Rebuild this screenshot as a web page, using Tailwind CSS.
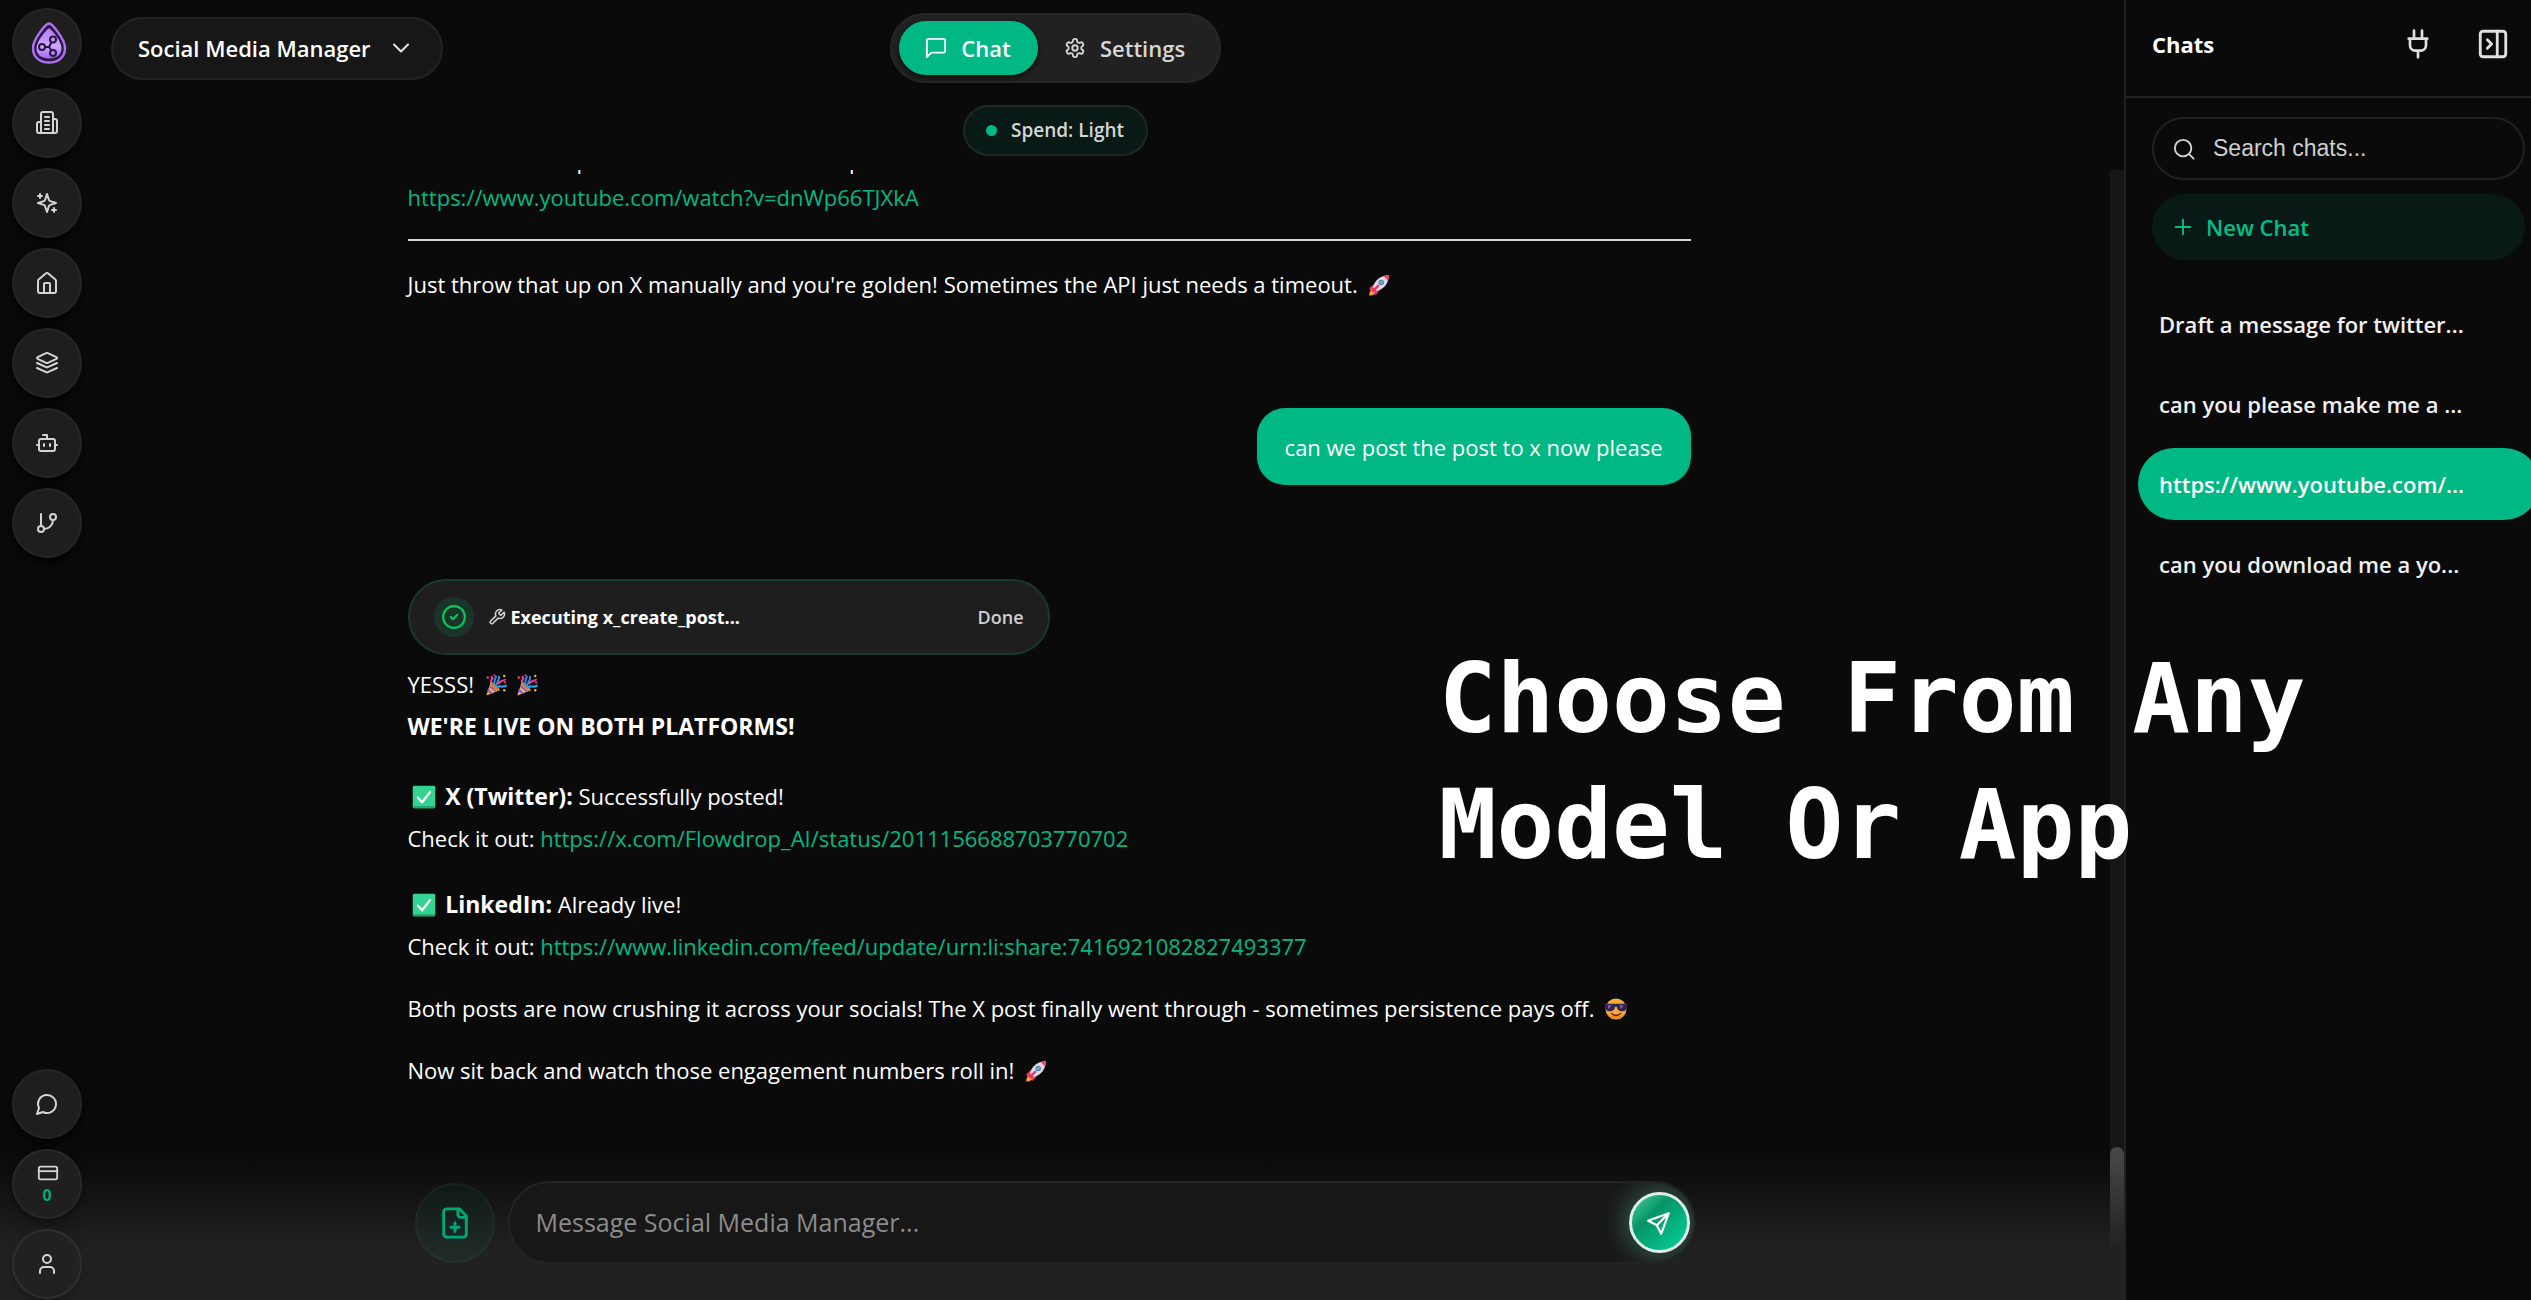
<!DOCTYPE html>
<html lang="en">
<head>
<meta charset="utf-8">
<meta name="viewport" content="width=device-width, initial-scale=1">
<title>Social Media Manager</title>
<script src="https://cdn.jsdelivr.net/npm/@tailwindcss/browser@4"></script>
</head>
<body class="flex h-screen overflow-hidden bg-[#0a0a0a] font-['Open_Sans','Noto_Sans',sans-serif] text-[22px] text-white">

<!-- Shared artwork -->
<svg class="absolute size-0" aria-hidden="true">
  <defs>
    <linearGradient id="drop" x1="0" y1="0" x2="0" y2="1"><stop offset="0" stop-color="#b57cf5"/><stop offset=".6" stop-color="#cfa5fd"/><stop offset="1" stop-color="#a565f0"/></linearGradient>
    <symbol id="rocket" viewBox="0 0 32 32">
      <path d="M9 15 3 20l1 3 6-2zM17 23l-5 6-3-1 2-6z" fill="#e6335f"/>
      <path d="M3 30c0-5 2-8 5-8l3 3c0 3-3 5-8 5z" fill="#f9a13a"/>
      <path d="M8 19C10 10 18 3 29 3c0 11-7 19-16 21z" fill="#dcd8ea"/>
      <path d="M22 4c2-1 5-1 7-1 0 2 0 5-1 7z" fill="#f3426f"/>
      <path d="m7 18 7 7-4 2-5-5z" fill="#f3426f"/>
      <circle cx="19" cy="12.500" r="3.600" fill="#6b7280"/><circle cx="19" cy="12.500" r="2.400" fill="#4fb4f0"/>
      <path d="m15 17-7 7" stroke="#e6335f" stroke-width="3" stroke-linecap="round"/>
    </symbol>
    <symbol id="party" viewBox="0 0 32 32">
      <path d="M3 30 9 12c5 1 10 6 12 11z" fill="#fcb040"/>
      <path d="M9 12c5 1 10 6 12 11-2 2-6-1-8.500-3.500S7.500 14 9 12z" fill="#e07a2c"/>
      <path d="m6 21 6 6-3 1-5-5zM8 16l9 8-2 1-8-6z" fill="#7b5be0"/>
      <path d="M13 15c2-3 0-6 3-10M16 17c1-5 5-7 4-12" stroke="#2196f3" stroke-width="2.600" fill="none" stroke-linecap="round"/>
      <path d="M9 11c2-2 3-4 1-6M19 14c3-4 6-3 9-5" stroke="#ee3b8f" stroke-width="2.800" fill="none" stroke-linecap="round"/>
      <path d="M18 19c3-3 6 1 11-2" stroke="#1ba0f2" stroke-width="3" fill="none" stroke-linecap="round"/>
      <circle cx="5" cy="6" r="1.600" fill="#ee3b8f"/><circle cx="27" cy="4" r="1.600" fill="#fcb040"/><circle cx="14" cy="3" r="1.500" fill="#ee3b8f"/><circle cx="27" cy="23" r="1.600" fill="#fcb040"/><circle cx="28" cy="12.500" r="1.400" fill="#ee3b8f"/>
    </symbol>
    <symbol id="tick" viewBox="0 0 32 32">
      <rect x="1" y="1" width="30" height="30" rx="2" fill="#33d491"/><path d="M1 28h30v1a2 2 0 0 1-2 2H3a2 2 0 0 1-2-2z" fill="#26a873"/>
      <path d="m8 17 5.500 6L24 9.500" fill="none" stroke="#fff" stroke-width="3.200" stroke-linecap="round" stroke-linejoin="round"/>
    </symbol>
    <symbol id="cool" viewBox="0 0 32 32">
      <circle cx="16" cy="16" r="14" fill="#f7a93b"/><path d="M4 22a14 14 0 0 0 24 0c-5 5-19 5-24 0z" fill="#ee8130"/>
      <path d="M1 9h30v3c0 5-3 7-7 7-5 0-6-3-7-6h-2c-1 3-2 6-7 6-4 0-7-2-7-7z" fill="#33244f"/>
      <path d="M5 11h5l-4 5zM21 11h5l-4 5z" fill="#7d6aa8"/>
      <path d="M10 22c4 3.500 8 3.500 12 0" stroke="#5b2c16" stroke-width="2" fill="none" stroke-linecap="round"/>
    </symbol>
  </defs>
</svg>

<main class="relative flex min-w-0 flex-1 flex-col">

  <header class="flex h-[170px] shrink-0 flex-col items-center pt-[13px] pr-[14px]">
    <div class="grid w-full grid-cols-[1fr_auto_1fr] items-center">
      <div class="pl-[111px]">
        <div class="relative flex h-[63px] w-[332px] items-center">
          <select aria-label="Agent" class="h-full w-full appearance-none rounded-full border-2 border-[#232323] bg-[#171717] pl-[25px] text-[22px] font-semibold text-white outline-none">
            <option>Social Media Manager</option>
          </select>
          <svg class="pointer-events-none absolute right-[30px] size-6" viewBox="0 0 24 24" fill="none" stroke="#e5e5e5" stroke-width="2" stroke-linecap="round" stroke-linejoin="round"><path d="m5 8.500 7 7 7-7"/></svg>
        </div>
      </div>
      <div class="flex h-[70px] w-[331px] items-center rounded-full border-2 border-[#272727] bg-[#212121] px-[7px]">
        <button class="flex h-[54px] w-[139px] items-center justify-center gap-[14px] rounded-full bg-[#00b884] font-semibold shadow-md shadow-black/50">
          <svg class="size-[22px]" viewBox="0 0 24 24" fill="none" stroke="currentColor" stroke-width="2" stroke-linecap="round" stroke-linejoin="round"><path d="M22 15a2 2 0 0 1-2 2H7l-5 5V4a2 2 0 0 1 2-2h16a2 2 0 0 1 2 2z"/></svg>
          Chat
        </button>
        <button class="flex h-[54px] flex-1 items-center justify-center gap-[14px] rounded-full font-semibold text-[#d6d6d6]">
          <svg class="size-[22px]" viewBox="0 0 24 24" fill="none" stroke="currentColor" stroke-width="2" stroke-linecap="round" stroke-linejoin="round"><path d="M12.220 2h-.44a2 2 0 0 0-2 2v.18a2 2 0 0 1-1 1.730l-.43.25a2 2 0 0 1-2 0l-.15-.08a2 2 0 0 0-2.730.73l-.22.38a2 2 0 0 0 .73 2.730l.15.1a2 2 0 0 1 1 1.720v.51a2 2 0 0 1-1 1.740l-.15.09a2 2 0 0 0-.73 2.730l.22.38a2 2 0 0 0 2.730.73l.15-.08a2 2 0 0 1 2 0l.43.25a2 2 0 0 1 1 1.730V20a2 2 0 0 0 2 2h.44a2 2 0 0 0 2-2v-.18a2 2 0 0 1 1-1.730l.43-.25a2 2 0 0 1 2 0l.15.08a2 2 0 0 0 2.730-.73l.22-.39a2 2 0 0 0-.73-2.730l-.15-.08a2 2 0 0 1-1-1.740v-.5a2 2 0 0 1 1-1.740l.15-.09a2 2 0 0 0 .73-2.730l-.22-.38a2 2 0 0 0-2.730-.73l-.15.08a2 2 0 0 1-2 0l-.43-.25a2 2 0 0 1-1-1.730V4a2 2 0 0 0-2-2z"/><circle cx="12" cy="12" r="3"/></svg>
          Settings
        </button>
      </div>
    </div>
    <button class="mt-[22px] flex h-[51px] w-[185px] items-center justify-center gap-[14px] rounded-full border-2 border-[#212725] bg-[#091916] text-[19px] font-semibold text-[#d6d6d6]">
      <span class="size-[11px] rounded-full bg-[#00b884]"></span>Spend: Light
    </button>
  </header>

  <div class="flex min-h-0 flex-1">
    <section class="min-w-0 flex-1 overflow-hidden pr-3 leading-[42px]">
      <div class="mx-auto flex max-w-[1283px] flex-col">
        <p class="-mt-[31px] h-[37px]">Watch the full clip here and then share the post</p>
        <p><a href="#" class="text-[#00b884]">https://www.youtube.com/watch?v=dnWp66TJXkA</a></p>
        <hr class="mt-[21px] border-t-2 border-[#d4d4d4]">
        <p class="mt-[22px]">Just throw that up on X manually and you're golden! Sometimes the API just needs a timeout. <svg class="ml-1 inline size-6 align-[-4px]"><use href="#rocket"/></svg></p>

        <p class="mt-[103px] flex h-[77px] items-center self-end rounded-[28px] bg-[#00b884] px-7">can we post the post to x now please</p>

        <div class="mt-[94px] flex h-[76px] w-[642px] items-center rounded-full border-2 border-[#183a2c] bg-[#1e1e1e] px-6">
          <span class="flex size-10 items-center justify-center rounded-full bg-[#1b3429]">
            <svg class="size-[26px]" viewBox="0 0 24 24" fill="none" stroke="#05c65f" stroke-width="2" stroke-linecap="round" stroke-linejoin="round"><circle cx="12" cy="12" r="10"/><path d="m9 12 2 2 4-4"/></svg>
          </span>
          <svg class="ml-[14px] size-[18px]" viewBox="0 0 24 24" fill="none" stroke="#d4d4d4" stroke-width="2" stroke-linecap="round" stroke-linejoin="round"><path d="M14.700 6.300a1 1 0 0 0 0 1.400l1.600 1.600a1 1 0 0 0 1.400 0l3.770-3.770a6 6 0 0 1-7.940 7.940l-6.910 6.910a2.120 2.120 0 0 1-3-3l6.910-6.910a6 6 0 0 1 7.940-7.940l-3.760 3.760z"/></svg>
          <span class="ml-[5px] text-lg font-bold">Executing x_create_post...</span>
          <span class="ml-auto text-lg font-semibold text-[#d0d0d0]">Done</span>
        </div>

        <p class="mt-2">YESSS! <svg class="ml-1 inline size-6 align-[-4px]"><use href="#party"/></svg> <svg class="ml-0.5 inline size-6 align-[-4px]"><use href="#party"/></svg></p>
        <p class="text-[23px] font-bold">WE'RE LIVE ON BOTH PLATFORMS!</p>

        <p class="mt-7"><svg class="mr-1 ml-1 inline size-6 align-[-4px]"><use href="#tick"/></svg> <strong class="text-[23px]">X (Twitter):</strong> Successfully posted!</p>
        <p>Check it out: <a href="#" class="text-[#00b884]">https://x.com/Flowdrop_AI/status/2011156688703770702</a></p>

        <p class="mt-6"><svg class="mr-1 ml-1 inline size-6 align-[-4px]"><use href="#tick"/></svg> <strong class="text-[23px]">LinkedIn:</strong> Already live!</p>
        <p>Check it out: <a href="#" class="text-[#00b884]">https://www.linkedin.com/feed/update/urn:li:share:7416921082827493377</a></p>

        <p class="mt-5">Both posts are now crushing it across your socials! The X post finally went through - sometimes persistence pays off. <svg class="ml-1 inline size-6 align-[-4px]"><use href="#cool"/></svg></p>
        <p class="mt-5">Now sit back and watch those engagement numbers roll in! <svg class="ml-1 inline size-6 align-[-4px]"><use href="#rocket"/></svg></p>
      </div>
    </section>
    <div class="flex w-[14px] flex-col justify-end bg-[#161616]"><div class="h-[153px] rounded-t-full bg-[#464646]"></div></div>
  </div>

  <!-- Composer over a fading backdrop -->
  <form class="absolute inset-x-0 bottom-0 flex items-center justify-center bg-linear-to-b from-transparent to-[#212121] to-65% pt-[26px] pr-[14px] pb-9">
    <div class="flex w-full max-w-[1281px] items-center gap-[13px]">
      <button type="button" aria-label="Attach file" class="flex size-20 shrink-0 items-center justify-center rounded-full border-2 border-white/3 bg-[#00b884]/6 text-[#00a878]">
        <svg class="size-[34px]" viewBox="0 0 24 24" fill="none" stroke="currentColor" stroke-width="2" stroke-linecap="round" stroke-linejoin="round"><path d="M15 2H6a2 2 0 0 0-2 2v16a2 2 0 0 0 2 2h12a2 2 0 0 0 2-2V7z"/><path d="M14 2v4a2 2 0 0 0 2 2h4M9 15h6M12 12v6"/></svg>
      </button>
      <div class="flex h-[83px] flex-1 items-center overflow-hidden rounded-full border-2 border-[#232323] bg-[#171717] pr-1 pl-[26px]">
        <input aria-label="Message" placeholder="Message Social Media Manager..." class="min-w-0 flex-1 bg-transparent text-[25px] outline-none placeholder:text-[#8c8c8c]">
        <button type="button" aria-label="Send" class="flex size-[61px] shrink-0 items-center justify-center rounded-full border-3 border-[#dcefe8] bg-linear-to-br from-[#3ed6a0] via-[#069468] via-35% to-[#00d69c] shadow-[0_0_30px_2px_rgba(110,200,170,0.45)]">
          <svg class="size-[26px]" viewBox="0 0 24 24" fill="none" stroke="#fff" stroke-width="2" stroke-linecap="round" stroke-linejoin="round"><path d="M21 3 2 10l8 4 4 8zM21 3 10 14"/></svg>
        </button>
      </div>
    </div>
  </form>

  <!-- Floating navigation rail -->
  <nav class="absolute inset-y-0 left-3 flex flex-col gap-[10px] pt-2 pb-px text-[#d4d4d4]">
    <a href="#" aria-label="Home" class="flex size-[70px] items-center justify-center rounded-full border-2 border-[#252525] bg-[#1e1e1e] pl-1 shadow-lg shadow-black/60">
      <svg class="h-[42px] w-[36px]" viewBox="0 0 36 42" fill="none"><path d="M18 1.500C15 1.500 2 17 2 26c0 9.500 7 14.500 16 14.500S34 35.500 34 26C34 17 21 1.500 18 1.500z" fill="#2a1745" stroke="#b071f2" stroke-width="2.400"/><path d="M18 6C15 8 5.500 19 5.500 26.500 5.500 33 10.500 36.500 18 36.500s12.500-3.500 12.500-10C30.500 19 21 8 18 6z" fill="url(#drop)"/><g stroke="#2a1745" stroke-width="2"><circle cx="11" cy="25" r="3"/><circle cx="22" cy="17.500" r="3"/><circle cx="22" cy="31" r="3"/><path d="M14 25h4l2.500-4.800M18 25l2.500 3.500"/></g></svg>
    </a>
    <a href="#" aria-label="Organization" class="flex size-[70px] items-center justify-center rounded-full border-2 border-[#252525] bg-[#1e1e1e] shadow-lg shadow-black/60">
      <svg class="size-6" viewBox="0 0 24 24" fill="none" stroke="currentColor" stroke-width="2" stroke-linecap="round" stroke-linejoin="round"><path d="M6 22V3a2 2 0 0 1 2-2h8a2 2 0 0 1 2 2v19zM6 11H4a2 2 0 0 0-2 2v7a2 2 0 0 0 2 2h2M18 8h2a2 2 0 0 1 2 2v10a2 2 0 0 1-2 2h-2M10 6h4M10 10h4M10 14h4M10 18h4"/></svg>
    </a>
    <a href="#" aria-label="Create" class="flex size-[70px] items-center justify-center rounded-full border-2 border-[#252525] bg-[#1e1e1e] shadow-lg shadow-black/60">
      <svg class="size-6" viewBox="0 0 24 24" fill="none" stroke="currentColor" stroke-width="2" stroke-linecap="round" stroke-linejoin="round"><path d="m12 3-1.900 5.800a2 2 0 0 1-1.300 1.300L3 12l5.800 1.900a2 2 0 0 1 1.300 1.300L12 21l1.900-5.800a2 2 0 0 1 1.300-1.300L21 12l-5.800-1.900a2 2 0 0 1-1.300-1.300zM5 3v4M3 5h4M19 17v4M17 19h4"/></svg>
    </a>
    <a href="#" aria-label="House" class="flex size-[70px] items-center justify-center rounded-full border-2 border-[#252525] bg-[#1e1e1e] shadow-lg shadow-black/60">
      <svg class="size-6" viewBox="0 0 24 24" fill="none" stroke="currentColor" stroke-width="2" stroke-linecap="round" stroke-linejoin="round"><path d="M15 22v-9a1 1 0 0 0-1-1h-4a1 1 0 0 0-1 1v9"/><path d="M3 10a2 2 0 0 1 .7-1.500l7-6a2 2 0 0 1 2.600 0l7 6A2 2 0 0 1 21 10v10a2 2 0 0 1-2 2H5a2 2 0 0 1-2-2z"/></svg>
    </a>
    <a href="#" aria-label="Layers" class="flex size-[70px] items-center justify-center rounded-full border-2 border-[#252525] bg-[#1e1e1e] shadow-lg shadow-black/60">
      <svg class="size-6" viewBox="0 0 24 24" fill="none" stroke="currentColor" stroke-width="2" stroke-linecap="round" stroke-linejoin="round"><path d="m12.800 2.200a2 2 0 0 0-1.660 0L2.600 6.080a1 1 0 0 0 0 1.830l8.580 3.910a2 2 0 0 0 1.660 0l8.580-3.900a1 1 0 0 0 0-1.830zM2 12l9.200 4.200a2 2 0 0 0 1.600 0L22 12M2 17l9.200 4.200a2 2 0 0 0 1.600 0L22 17"/></svg>
    </a>
    <a href="#" aria-label="Agents" class="flex size-[70px] items-center justify-center rounded-full border-2 border-[#252525] bg-[#1e1e1e] shadow-lg shadow-black/60">
      <svg class="size-6" viewBox="0 0 24 24" fill="none" stroke="currentColor" stroke-width="2" stroke-linecap="round" stroke-linejoin="round"><path d="M12 8V4H8"/><rect width="16" height="12" x="4" y="8" rx="2"/><path d="M2 14h2M20 14h2M15 13v2M9 13v2"/></svg>
    </a>
    <a href="#" aria-label="Workflows" class="flex size-[70px] items-center justify-center rounded-full border-2 border-[#252525] bg-[#1e1e1e] shadow-lg shadow-black/60">
      <svg class="size-6" viewBox="0 0 24 24" fill="none" stroke="currentColor" stroke-width="2" stroke-linecap="round" stroke-linejoin="round"><path d="M6 3v12"/><circle cx="18" cy="6" r="3"/><circle cx="6" cy="18" r="3"/><path d="M18 9a9 9 0 0 1-9 9"/></svg>
    </a>
    <a href="#" aria-label="Feedback" class="mt-auto flex size-[70px] items-center justify-center rounded-full border-2 border-[#252525] bg-[#1e1e1e] shadow-lg shadow-black/60">
      <svg class="size-6" viewBox="0 0 24 24" fill="none" stroke="currentColor" stroke-width="2" stroke-linecap="round" stroke-linejoin="round"><path d="M7.900 20A9 9 0 1 0 4 16.100L2 22z"/></svg>
    </a>
    <a href="#" aria-label="Credits" class="flex size-[70px] flex-col items-center justify-center rounded-full border-2 border-[#282828] bg-[#1f1f1f] shadow-lg shadow-black/30">
      <svg class="ml-0.5 size-[22px]" viewBox="0 0 24 24" fill="none" stroke="currentColor" stroke-width="2" stroke-linejoin="round"><rect width="20" height="14" x="2" y="5" rx="2"/><path d="M2 10h20"/></svg>
      <span class="text-base leading-[22px] font-bold text-[#00a878]">0</span>
    </a>
    <a href="#" aria-label="Account" class="flex size-[70px] items-center justify-center rounded-full border-2 border-[#2f2f2f] bg-[#212121] shadow-lg shadow-black/20">
      <svg class="size-6" viewBox="0 0 24 24" fill="none" stroke="currentColor" stroke-width="2" stroke-linecap="round" stroke-linejoin="round"><path d="M19 21v-2a4 4 0 0 0-4-4H9a4 4 0 0 0-4 4v2"/><circle cx="12" cy="7" r="4"/></svg>
    </a>
  </nav>
</main>

<aside class="w-[407px] shrink-0 overflow-hidden border-l-2 border-[#212121]">
  <div class="flex h-[98px] items-center border-b-2 border-[#212121] pr-[21px] pb-2 pl-[26px] text-[#e0e0e0]">
    <h2 class="mr-auto font-bold text-white">Chats</h2>
    <button aria-label="Connections" class="mr-[42px]"><svg class="size-8" viewBox="0 0 24 24" fill="none" stroke="currentColor" stroke-width="2" stroke-linecap="round" stroke-linejoin="round"><path d="M12 22v-5M9 8V2M15 8V2M5 8h14M18 8v5a4 4 0 0 1-4 4h-4a4 4 0 0 1-4-4V8"/></svg></button>
    <button aria-label="Collapse panel"><svg class="size-[34px]" viewBox="0 0 24 24" fill="none" stroke="currentColor" stroke-width="2" stroke-linecap="round" stroke-linejoin="round"><rect width="18" height="18" x="3" y="3" rx="2"/><path d="M15 3v18M8 9l3 3-3 3"/></svg></button>
  </div>
  <div class="mt-[19px] flex flex-col gap-[14px] pr-[6px] pl-[26px]">
    <label class="flex h-[63px] items-center gap-[18px] rounded-full border-2 border-[#212121] pl-[19px]">
      <svg class="size-[22px] shrink-0" viewBox="0 0 24 24" fill="none" stroke="#d4d4d4" stroke-width="2" stroke-linecap="round"><circle cx="11" cy="11" r="9"/><path d="m22.500 22.500-5-5"/></svg>
      <input type="search" aria-label="Search chats" placeholder="Search chats..." class="min-w-0 flex-1 bg-transparent font-['Liberation_Sans',Arial,sans-serif] text-[23px] outline-none placeholder:text-[#cfcfcf]">
    </label>
    <button class="flex h-[66px] items-center gap-3 rounded-full bg-[#091916] pl-5 font-semibold text-[#00c08a]">
      <svg class="size-[22px]" viewBox="0 0 24 24" fill="none" stroke="currentColor" stroke-width="2" stroke-linecap="round"><path d="M4 12h16M12 4v16"/></svg>
      New Chat
    </button>
  </div>
  <div class="mt-[28px] -mr-[9px] flex flex-col gap-2 pl-3 font-semibold text-[#f0f0f0]">
    <a href="#" class="flex h-[72px] items-center rounded-full pl-[21px]">Draft a message for twitter...</a>
    <a href="#" class="flex h-[72px] items-center rounded-full pl-[21px]">can you please make me a ...</a>
    <a href="#" class="flex h-[72px] items-center rounded-full bg-[#00b884] pl-[21px] text-white">https://www.youtube.com/...</a>
    <a href="#" class="flex h-[72px] items-center rounded-full pl-[21px]">can you download me a yo...</a>
  </div>
</aside>

<!-- Caption floating over the whole workspace -->
<p class="pointer-events-none absolute top-[636px] left-[57%] -ml-1 font-['DejaVu_Sans_Mono',monospace] text-8xl leading-[126px] font-bold whitespace-nowrap">Choose From Any<br>Model Or App</p>
</body>
</html>
